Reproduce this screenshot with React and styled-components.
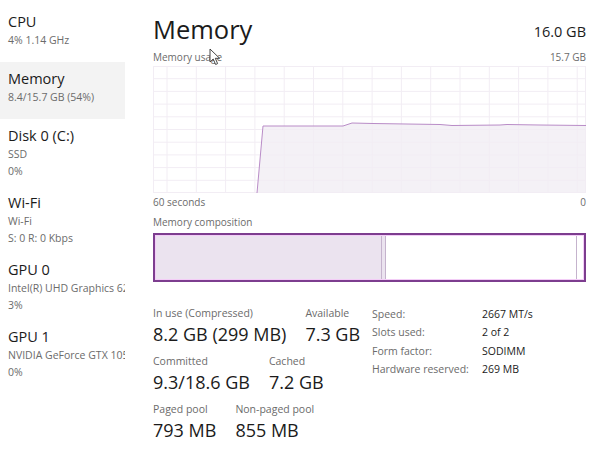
import React from 'react';
import styled, { createGlobalStyle } from 'styled-components';

const GlobalStyle = createGlobalStyle`
  html, body {
    margin: 0;
    padding: 0;
    background: #ffffff;
  }
  body {
    font-family: "Open Sans", "Noto Sans", "Liberation Sans", sans-serif;
    color: #1b1b1b;
  }
`;

const Page = styled.div`
  display: flex;
  width: 598px;
  height: 450px;
  overflow: hidden;
  position: relative;
`;

const Sidebar = styled.div`
  width: 125px;
  flex-shrink: 0;
  padding-top: 5px;
  display: flex;
  flex-direction: column;
`;

const NavItem = styled.div`
  box-sizing: border-box;
  min-height: 57px;
  padding: 7px 8px;
  background: ${(p) => (p.$active ? '#f3f3f3' : 'transparent')};
  white-space: nowrap;
  overflow: hidden;
`;

const NavTitle = styled.div`
  font-size: 14.5px;
  line-height: 20px;
  color: #1b1b1b;
`;

const NavSub = styled.div`
  font-size: 10.5px;
  line-height: 16.5px;
  color: #6b6b6b;
`;

const Main = styled.div`
  flex: 1;
  padding: 11px 12px 0 28px;
  display: flex;
  flex-direction: column;
`;

const HeaderRow = styled.div`
  display: flex;
  justify-content: space-between;
  align-items: center;
  height: 36px;
`;

const Heading = styled.div`
  font-size: 25.5px;
  line-height: 36px;
  color: #1b1b1b;
`;

const Total = styled.div`
  font-size: 14.5px;
  padding-top: 5px;
`;

const CaptionRow = styled.div`
  display: flex;
  justify-content: space-between;
  font-size: 10px;
  line-height: 16px;
  color: #6b6b6b;
  margin-top: ${(p) => p.$top || 0}px;
`;

const Chart = styled.svg`
  display: block;
  width: 433px;
  height: 127px;
  margin-top: 1px;
`;

const Composition = styled.div`
  box-sizing: border-box;
  margin-top: 3px;
  width: 433px;
  height: 49px;
  border: 2px solid #7d3d8f;
  display: flex;
`;

const CompInner = styled.div`
  flex: 1;
  display: flex;
  border: 1px solid #f3cdf7;
`;

const Segment = styled.div`
  width: ${(p) => p.$w}px;
  flex: ${(p) => (p.$grow ? 1 : 'none')};
  background: ${(p) => p.$bg || '#ffffff'};
  border-right: ${(p) => (p.$line ? '1px solid #c5b3cd' : 'none')};
`;

const Stats = styled.div`
  display: flex;
  margin-top: 23px;
`;

const LeftStats = styled.div`
  display: flex;
  flex-direction: column;
  gap: 6px;
  width: 219px;
`;

const StatRow = styled.div`
  display: flex;
  gap: 19px;
`;

const Stat = styled.div`
  display: flex;
  flex-direction: column;
`;

const StatLabel = styled.div`
  font-size: 10.5px;
  line-height: 16px;
  color: #6b6b6b;
  white-space: nowrap;
`;

const StatValue = styled.div`
  font-size: 18px;
  line-height: 26px;
  color: #1b1b1b;
  white-space: nowrap;
`;

const InfoTable = styled.div`
  display: grid;
  grid-template-columns: 110px auto;
  grid-auto-rows: 18.3px;
  font-size: 10.5px;
  align-items: center;
`;

const InfoKey = styled.div`
  color: #6b6b6b;
  white-space: nowrap;
`;

const InfoVal = styled.div`
  color: #1b1b1b;
  white-space: nowrap;
`;

const Cursor = styled.svg`
  position: absolute;
  left: 209px;
  top: 48px;
  width: 12px;
  height: 18px;
`;

const nav = [
  { title: 'CPU', sub: ['4%  1.14 GHz'] },
  { title: 'Memory', sub: ['8.4/15.7 GB (54%)'], active: true },
  { title: 'Disk 0 (C:)', sub: ['SSD', '0%'] },
  { title: 'Wi-Fi', sub: ['Wi-Fi', 'S: 0 R: 0 Kbps'] },
  { title: 'GPU 0', sub: ['Intel(R) UHD Graphics 620', '3%'] },
  { title: 'GPU 1', sub: ['NVIDIA GeForce GTX 1050', '0%'] },
];

const info = [
  ['Speed:', '2667 MT/s'],
  ['Slots used:', '2 of 2'],
  ['Form factor:', 'SODIMM'],
  ['Hardware reserved:', '269 MB'],
];

// usage line, chart coords (x from 153, y from 66)
const points = [
  [104, 127], [110, 60], [190, 60], [199, 57], [220, 57.5], [287, 58.5],
  [299, 59.5], [347, 59], [354, 58.5], [387, 59], [433, 59.5],
];

const UsageChart = () => {
  const w = 433;
  const h = 127;
  const vLines = [];
  for (let x = 14; x < w; x += 29.3) vLines.push(x);
  const hLines = [];
  for (let i = 1; i < 10; i++) hLines.push((h / 10) * i);
  const line = points.map((p, i) => `${i ? 'L' : 'M'}${p[0]} ${p[1]}`).join(' ');
  const area = `${line} L${w} ${h} L104 ${h} Z`;
  return (
    <Chart viewBox={`0 0 ${w} ${h}`}>
      <path d={area} fill="#f4f1f6" />
      {vLines.map((x) => (
        <line key={x} x1={x} y1="0" x2={x} y2={h} stroke="#f2edf4" strokeWidth="1" />
      ))}
      {hLines.map((y) => (
        <line key={y} x1="0" y1={y} x2={w} y2={y} stroke="#f2edf4" strokeWidth="1" />
      ))}
      <rect x="0.5" y="0.5" width={w - 1} height={h - 1} fill="none" stroke="#f2edf4" />
      <path d={line} fill="none" stroke="#b98cc7" strokeWidth="1" />
    </Chart>
  );
};

const App = () => (
  <>
    <GlobalStyle />
    <Page>
      <Sidebar>
        {nav.map((n) => (
          <NavItem key={n.title} $active={n.active}>
            <NavTitle>{n.title}</NavTitle>
            {n.sub.map((s) => (
              <NavSub key={s}>{s}</NavSub>
            ))}
          </NavItem>
        ))}
      </Sidebar>
      <Main>
        <HeaderRow>
          <Heading>Memory</Heading>
          <Total>16.0 GB</Total>
        </HeaderRow>
        <CaptionRow $top={2}>
          <span>Memory usage</span>
          <span>15.7 GB</span>
        </CaptionRow>
        <UsageChart />
        <CaptionRow $top={1}>
          <span>60 seconds</span>
          <span>0</span>
        </CaptionRow>
        <CaptionRow $top={4}>
          <span>Memory composition</span>
        </CaptionRow>
        <Composition>
          <CompInner>
            <Segment $w={225} $bg="#ebe3ef" $line />
            <Segment $w={3} $bg="#ebe3ef" $line />
            <Segment $grow $line />
            <Segment $w={6} />
          </CompInner>
        </Composition>
        <Stats>
          <LeftStats>
            <StatRow>
              <Stat>
                <StatLabel>In use (Compressed)</StatLabel>
                <StatValue>8.2 GB (299 MB)</StatValue>
              </Stat>
              <Stat>
                <StatLabel>Available</StatLabel>
                <StatValue>7.3 GB</StatValue>
              </Stat>
            </StatRow>
            <StatRow>
              <Stat>
                <StatLabel>Committed</StatLabel>
                <StatValue>9.3/18.6 GB</StatValue>
              </Stat>
              <Stat>
                <StatLabel>Cached</StatLabel>
                <StatValue>7.2 GB</StatValue>
              </Stat>
            </StatRow>
            <StatRow>
              <Stat>
                <StatLabel>Paged pool</StatLabel>
                <StatValue>793 MB</StatValue>
              </Stat>
              <Stat>
                <StatLabel>Non-paged pool</StatLabel>
                <StatValue>855 MB</StatValue>
              </Stat>
            </StatRow>
          </LeftStats>
          <InfoTable>
            {info.map(([k, v]) => (
              <React.Fragment key={k}>
                <InfoKey>{k}</InfoKey>
                <InfoVal>{v}</InfoVal>
              </React.Fragment>
            ))}
          </InfoTable>
        </Stats>
      </Main>
      <Cursor viewBox="0 0 12 18">
        <path d="M1 1 L1 14 L4.2 11 L6.6 16.5 L8.6 15.6 L6.3 10.3 L10.6 10.3 Z" fill="#ffffff" stroke="#333" strokeWidth="0.9" strokeLinejoin="round" />
      </Cursor>
    </Page>
  </>
);

export default App;
